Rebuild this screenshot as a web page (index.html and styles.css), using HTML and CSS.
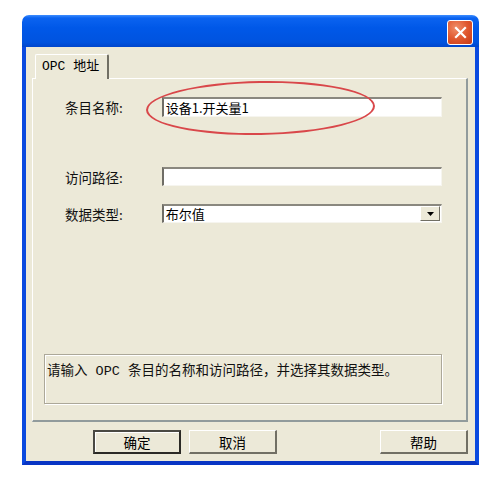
FILE: index.html
```html
<!DOCTYPE html>
<html lang="zh-CN">
<head>
    <meta charset="UTF-8">
    <title>OPC 地址</title>
    <link rel="stylesheet" href="styles.css">
</head>
<body>

<div class="window">
    <!-- 标题栏 -->
    <div class="titlebar">
        <div class="close-btn">
            <svg width="13" height="13" viewBox="0 0 13 13">
                <path d="M2 2 L11 11 M11 2 L2 11" stroke="#fff" stroke-width="2.2" stroke-linecap="square"/>
            </svg>
        </div>
    </div>

    <div class="client">
        <div class="tabs">
            <div class="tab">OPC 地址</div>
        </div>

        <div class="panel">
            <div class="row row-name">
                <label>条目名称:</label>
                <div class="textbox">设备1.开关量1</div>
            </div>
            <div class="row row-path">
                <label>访问路径:</label>
                <div class="textbox"></div>
            </div>
            <div class="row row-type">
                <label>数据类型:</label>
                <div class="combo">
                    <span class="combo-text">布尔值</span>
                    <span class="combo-btn">
                        <svg width="7" height="4" viewBox="0 0 7 4"><path d="M0 0 H7 L3.5 4 Z" fill="#000"/></svg>
                    </span>
                </div>
            </div>

            <div class="help-box">请输入 OPC 条目的名称和访问路径，并选择其数据类型。</div>
        </div>

        <div class="buttons">
            <button class="btn btn-default">确定</button>
            <button class="btn">取消</button>
            <span class="spacer"></span>
            <button class="btn">帮助</button>
        </div>
    </div>

    <!-- 红色圈注 -->
    <div class="mark"></div>
</div>

</body>
</html>
```

FILE: styles.css
```css
body {
    margin: 0;
    background-color: #fff;
    font-family: "Noto Sans CJK SC", "Liberation Sans", sans-serif;
    font-size: 13px;
    color: #000;
}

.window {
    position: relative;
    margin: 15px 0 0 22px;
    width: 457px;
    height: 450px;
    display: flex;
    flex-direction: column;
}

.titlebar {
    height: 32px;
    border-radius: 7px 7px 0 0;
    background: linear-gradient(#3d8dff 0, #0b63f0 3px, #0058e8 40%, #0053df 85%, #0046cc 100%);
    display: flex;
    justify-content: flex-end;
    align-items: flex-start;
    padding: 5px 6px 0 0;
    box-sizing: border-box;
}

.close-btn {
    width: 24px;
    height: 23px;
    border: 1px solid #fff;
    border-radius: 3px;
    background: radial-gradient(circle at 35% 30%, #f08f6a 0, #e0582f 50%, #c63a18 100%);
    display: flex;
    align-items: center;
    justify-content: center;
}

.client {
    flex: 1;
    background-color: #ece9d8;
    border: 4px solid #0a4adf;
    border-top: none;
    border-bottom-color: #0835c4;
    display: flex;
    flex-direction: column;
    padding: 7px 7px 0 6px;
}

.tabs {
    display: flex;
    padding-left: 3px;
}

.tab {
    height: 24px;
    line-height: 24px;
    padding: 0 8px 0 6px;
    font-family: "Liberation Mono", "Noto Sans CJK SC", monospace;
    font-size: 13px;
    background-color: #ece9d8;
    border-top: 1px solid #fff;
    border-left: 1px solid #fff;
    border-right: 2px solid #716f64;
    border-radius: 2px 2px 0 0;
    margin-bottom: -1px;
    position: relative;
}

.panel {
    height: 344px;
    box-sizing: border-box;
    border-top: 1px solid #fff;
    border-left: 1px solid #fff;
    border-right: 2px solid #919b9c;
    border-bottom: 2px solid #919b9c;
    padding: 18px 24px 16px 11px;
    display: flex;
    flex-direction: column;
}

.row {
    display: flex;
    align-items: center;
}

.row label {
    width: 97px;
    padding-left: 21px;
    font-size: 13.5px;
    color: #111;
}

.row-name {
    height: 20px;
}

.row-path {
    height: 19px;
    margin-top: 50px;
}

.row-type {
    height: 19px;
    margin-top: 18px;
}

.textbox {
    width: 281px;
    height: 100%;
    box-sizing: border-box;
    background-color: #fff;
    border-top: 2px solid #8a887f;
    border-left: 2px solid #6f6d66;
    border-right: 1px solid #f6f5ef;
    border-bottom: 1px solid #f6f5ef;
    padding-left: 2px;
    line-height: 17px;
    font-size: 13px;
    white-space: nowrap;
}

.combo {
    width: 281px;
    height: 100%;
    box-sizing: border-box;
    background-color: #fff;
    border-top: 2px solid #8a887f;
    border-left: 2px solid #6f6d66;
    border-right: 1px solid #f6f5ef;
    border-bottom: 1px solid #f6f5ef;
    display: flex;
    align-items: stretch;
}

.combo-text {
    flex: 1;
    padding-left: 2px;
    line-height: 16px;
}

.combo-btn {
    width: 18px;
    margin: 0 1px 1px 0;
    background-color: #ece9d8;
    border-top: 1px solid #fff;
    border-left: 1px solid #fff;
    border-right: 1px solid #716f64;
    border-bottom: 1px solid #716f64;
    display: flex;
    align-items: center;
    justify-content: center;
}

.help-box {
    margin-top: auto;
    height: 50px;
    box-sizing: border-box;
    border: 1px solid #aca899;
    box-shadow: inset 1px 1px #fff, 1px 1px #fff;
    padding: 4px 2px 0 2px;
    font-family: "Liberation Mono", "Noto Sans CJK SC", monospace;
    font-size: 13.5px;
    color: #111;
    white-space: nowrap;
}

.buttons {
    display: flex;
    padding: 8px 0 0 61px;
    gap: 8px;
}

.spacer {
    flex: 1;
}

.btn {
    width: 88px;
    height: 24px;
    font-family: "Noto Sans CJK SC", sans-serif;
    font-size: 13.5px;
    background-color: #ece9d8;
    border-top: 1px solid #fff;
    border-left: 1px solid #fff;
    border-right: 2px solid #716f64;
    border-bottom: 2px solid #716f64;
    padding: 0;
    color: #000;
}

.btn-default {
    border: 2px solid #2b2a26;
    border-top-color: #4a4943;
    border-left-color: #4a4943;
    box-shadow: inset 1px 1px #fff;
}

.mark {
    position: absolute;
    left: 124px;
    top: 66px;
    width: 229px;
    height: 54px;
    border: 2px solid #d9474a;
    border-radius: 50%;
    transform: rotate(-1deg);
    box-sizing: border-box;
}
```
